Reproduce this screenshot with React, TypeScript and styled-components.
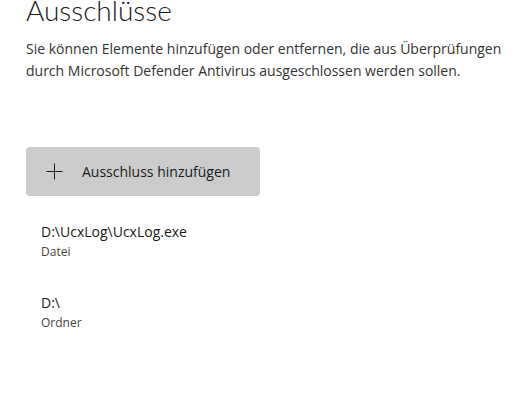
import React from "react";
import styled, { createGlobalStyle } from "styled-components";

const Global = createGlobalStyle`
  html, body { margin: 0; padding: 0; background: #ffffff; }
  body { font-family: "Segoe UI", "Open Sans", "Noto Sans", sans-serif; color: #1a1a1a; }
  * { box-sizing: border-box; }
`;

const Page = styled.main`
  display: flex;
  flex-direction: column;
  align-items: flex-start;
  padding: 0 0 0 26px;
  width: 527px;
  height: 408px;
  overflow: hidden;
`;

const Title = styled.h1`
  margin: -9px 0 0 0;
  font-family: "Lato", "Open Sans", sans-serif;
  font-size: 28px;
  font-weight: 300;
  line-height: 38px;
  color: #1b1b1b;
`;

const Description = styled.p`
  margin: 9px 0 0 0;
  font-size: 14px;
  line-height: 22px;
  color: #333333;
  width: 495px;
`;

const AddButton = styled.button`
  margin-top: 65px;
  display: flex;
  align-items: center;
  gap: 19px;
  width: 234px;
  height: 49px;
  padding: 0 0 0 20px;
  border: none;
  border-radius: 4px;
  background: #cccccc;
  font-family: inherit;
  font-size: 14px;
  color: #1a1a1a;
  cursor: pointer;
`;

const List = styled.ul`
  list-style: none;
  margin: 25px 0 0 0;
  padding: 0 0 0 15px;
  display: flex;
  flex-direction: column;
  gap: 31px;
`;

const Item = styled.li`
  display: flex;
  flex-direction: column;
`;

const ItemName = styled.span`
  font-size: 14px;
  line-height: 21px;
  color: #1a1a1a;
`;

const ItemType = styled.span`
  font-size: 12px;
  line-height: 19px;
  color: #444444;
`;

const PlusIcon = () => (
  <svg width="17" height="17" viewBox="0 0 17 17" aria-hidden="true">
    <path d="M8.5 0.5V16.5M0.5 8.5H16.5" stroke="#1a1a1a" strokeWidth="1" fill="none" />
  </svg>
);

const items = [
  { name: "D:\\UcxLog\\UcxLog.exe", type: "Datei" },
  { name: "D:\\", type: "Ordner" },
];

export default function App() {
  return (
    <>
      <Global />
      <Page>
        <Title>Ausschlüsse</Title>
        <Description>
          Sie können Elemente hinzufügen oder entfernen, die aus Überprüfungen durch Microsoft Defender Antivirus ausgeschlossen werden sollen.
        </Description>
        <AddButton>
          <PlusIcon />
          Ausschluss hinzufügen
        </AddButton>
        <List>
          {items.map((it) => (
            <Item key={it.name}>
              <ItemName>{it.name}</ItemName>
              <ItemType>{it.type}</ItemType>
            </Item>
          ))}
        </List>
      </Page>
    </>
  );
}
